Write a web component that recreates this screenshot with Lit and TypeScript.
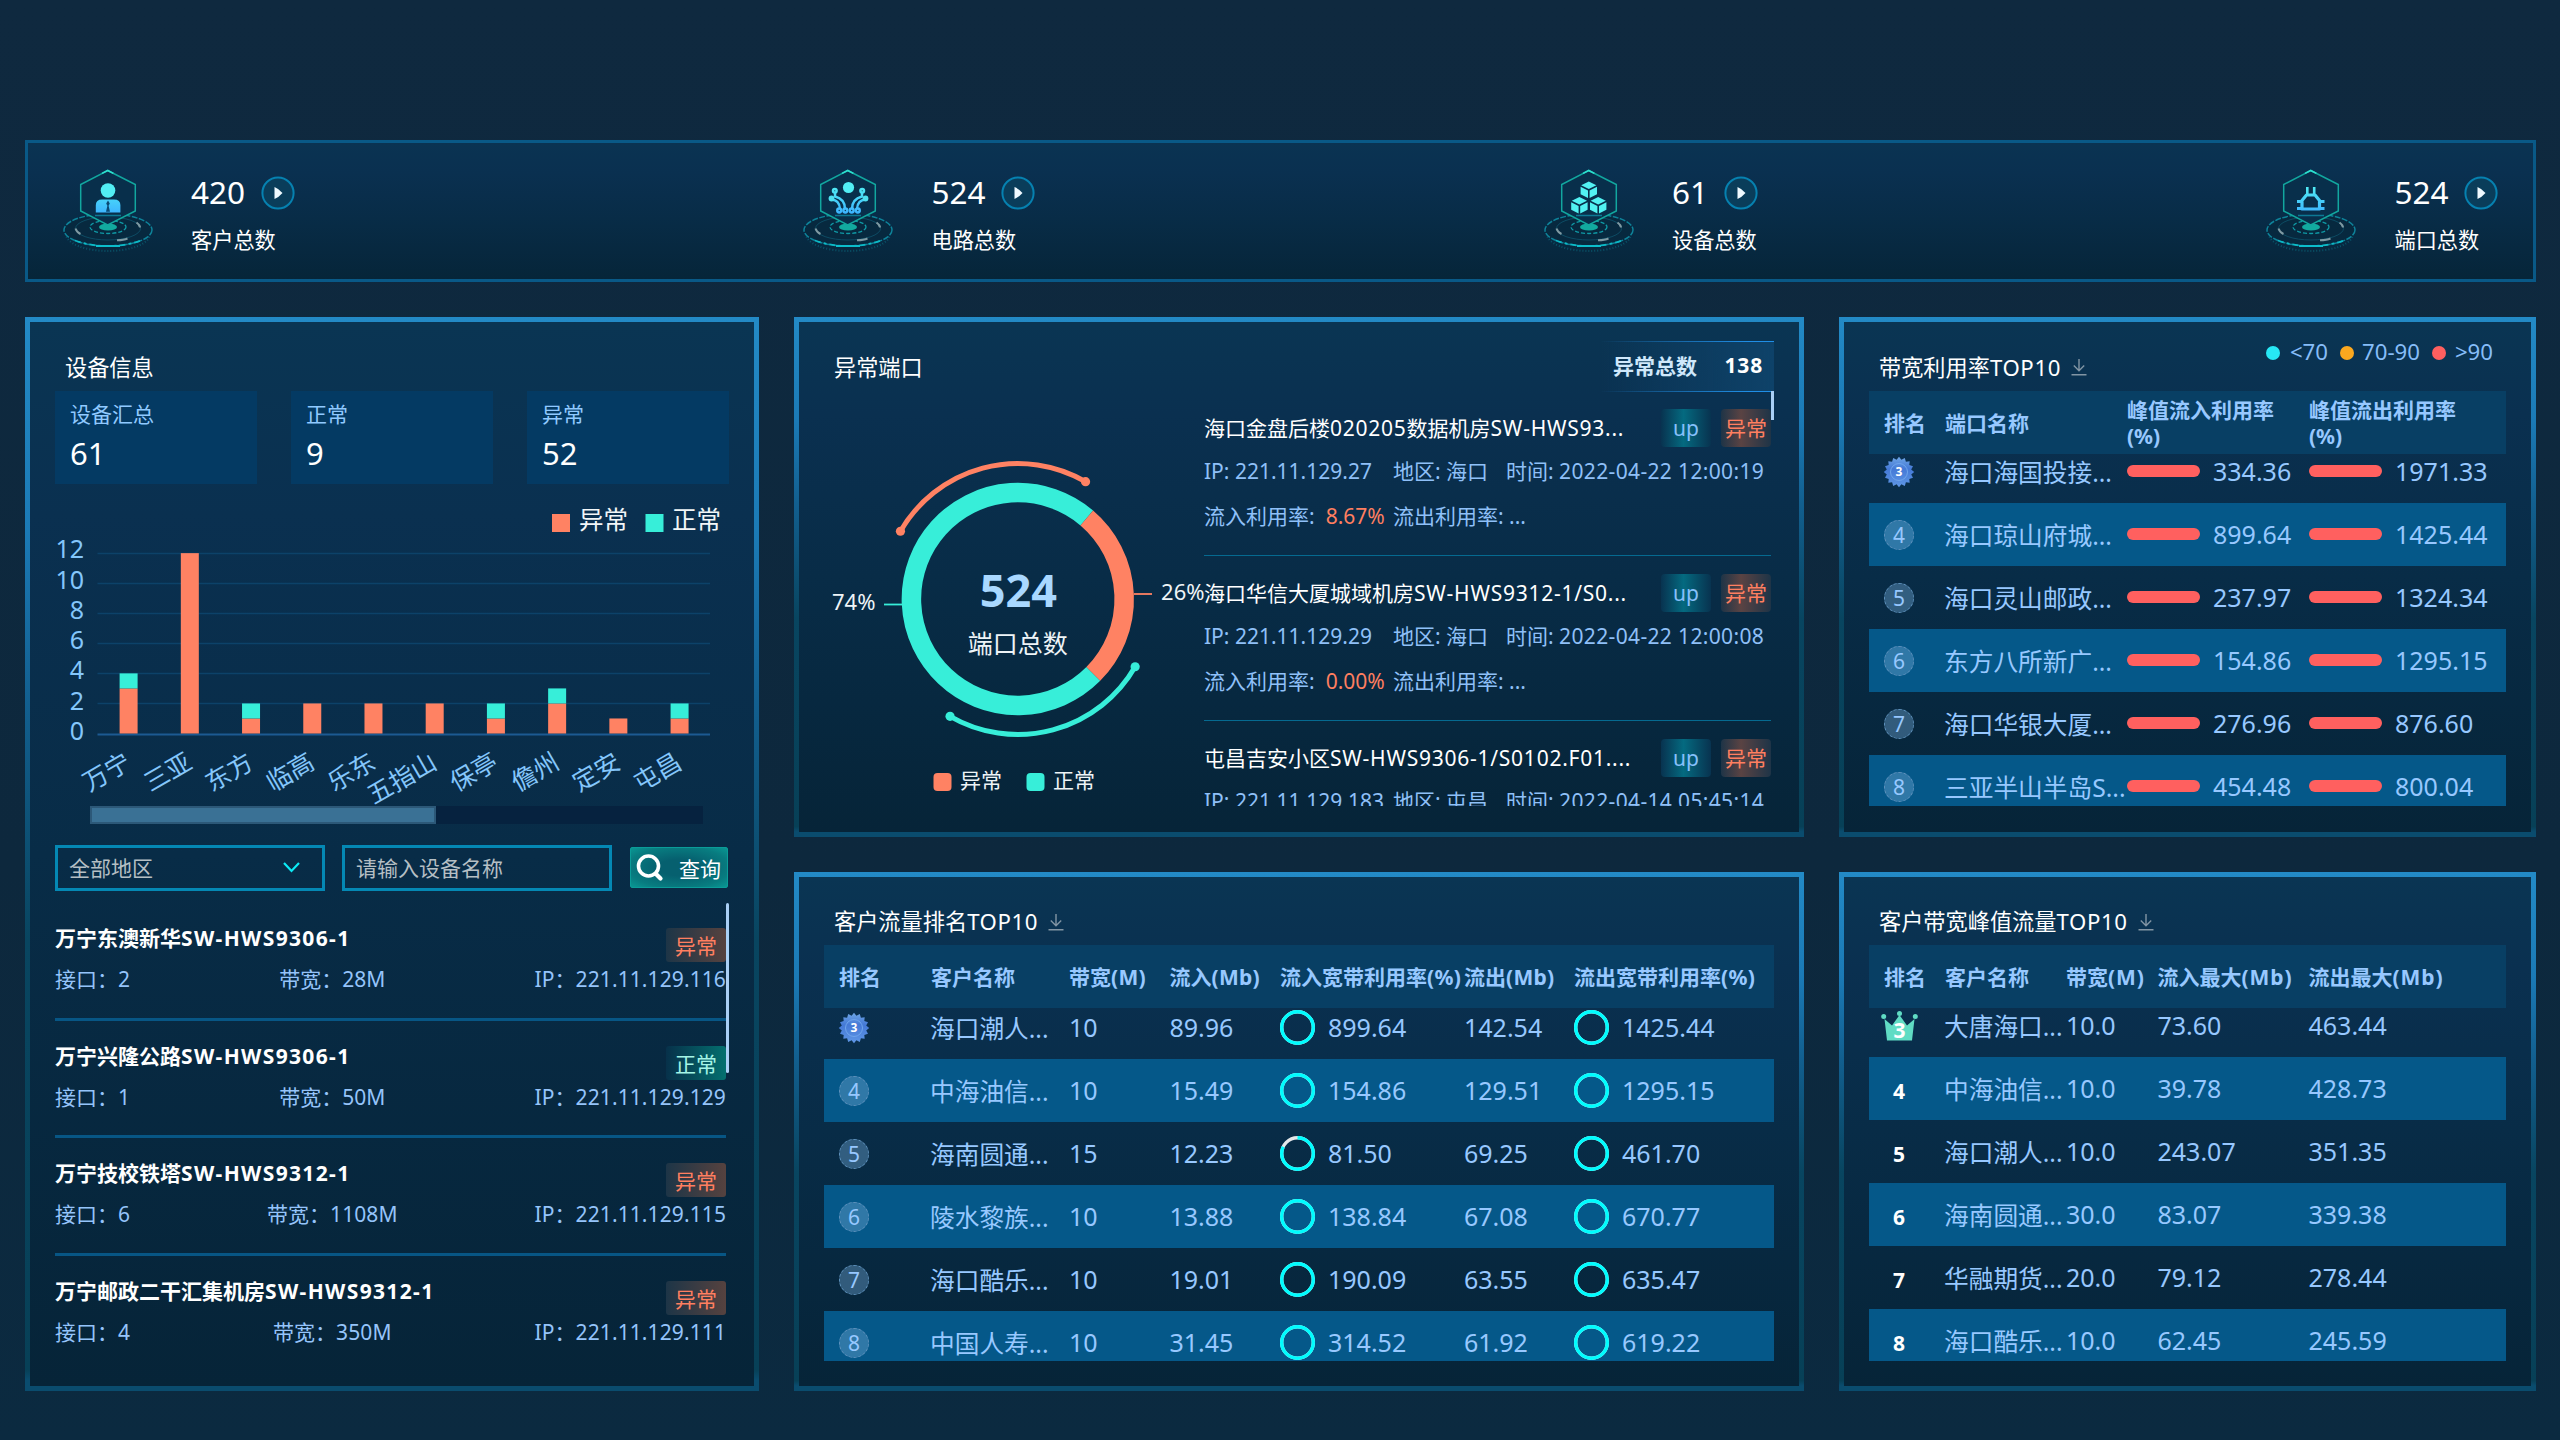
import { LitElement, html, svg, css } from "lit";
import { customElement, property } from "lit/decorators.js";
import { classMap } from "lit/directives/class-map.js";

const FONT = css`"Noto Sans", "Noto Sans CJK SC", sans-serif`;

const base = css`
  :host {
    display: block;
    font-family: ${FONT};
    color: #fff;
  }
  * {
    box-sizing: border-box;
  }
  svg {
    display: block;
    overflow: visible;
  }
  .lat {
    letter-spacing: var(--track, 0.6px);
  }
`;

/* Wraps the Latin runs of a mixed string so that they can be tracked apart from the Chinese ones. */
const mix = (s: string) =>
  s.split(/([\x21-\x7e]+)/).map((part, i) => (i % 2 ? html`<span class="lat">${part}</span>` : part));

/* ---------- totals strip ---------- */

const glyphs: Record<string, unknown> = {
  customer: svg`
    <circle cx="45" cy="22.5" r="7.3" fill="#52eef4"/>
    <path d="M32.8 44.6V37q0-5.6 6.4-5.6H51q6.4 0 6.4 5.6v7.6Z" fill="url(#tone)"/>
    <path d="M45 32.5l-1.8 3 1.2 2.2-1.4 6h4l-1.4-6 1.2-2.2Z" fill="#0b4a74"/>`,
  circuit: svg`
    <circle cx="45.5" cy="19.5" r="5.6" fill="#52eef4"/>
    <g fill="none" stroke="url(#tone)" stroke-width="2.5">
      <circle cx="31.8" cy="22.8" r="1.8"/><circle cx="59.2" cy="22.8" r="1.8"/>
      <path d="M32 25v3.5q10 2.5 10 12.500M59 25v3.5q-10 2.5-10 12.500"/>
      <path d="M28.500 31.500q8 .5 8.500 9.500M62.500 31.500q-8 .5-8.500 9.500"/>
      <circle cx="36.200" cy="42.500" r="1.900"/><circle cx="42.300" cy="42.500" r="1.900"/>
      <circle cx="48.700" cy="42.500" r="1.900"/><circle cx="54.800" cy="42.500" r="1.900"/>
    </g>
    <circle cx="28.500" cy="30.500" r="2.900" fill="#4fe0f0"/><circle cx="62.500" cy="30.500" r="2.900" fill="#4fe0f0"/>`,
  device: svg`${[
    [44.8, 13.5],
    [35.4, 29],
    [54.2, 29],
  ].map(
    ([x, y]) => svg`<g transform="translate(${x} ${y})" fill="url(#tone)">
      <path d="M0 0l7.600 3.800L0 7.600l-7.600-3.800Z"/>
      <path d="M-8.200 5.200L-.8 9v7.600l-7.400-3.800ZM8.200 5.200L.8 9v7.600l7.400-3.800Z"/></g>`
  )}`,
  port: svg`
    <g fill="none" stroke="url(#tone)" stroke-width="3.200" stroke-linejoin="round">
      <path d="M41.300 19v7M48.200 19v7" stroke-width="2.600"/>
      <path d="M40.500 27h8.500l4.500 5.500v8.500h-17.500v-8.500Z"/>
      <path d="M31 33.500h5M31 40.500h5M53.500 33.500h5M53.500 40.500h5"/>
    </g>`,
};

@customElement("total-tile")
class TotalTile extends LitElement {
  @property() value = "";
  @property() label = "";
  @property() kind = "customer";
  static styles = [
    base,
    css`
      :host {
        display: flex;
        padding-top: 25px;
      }
      .text {
        padding: 0 0 0 38px;
      }
      .row {
        display: flex;
        align-items: center;
        height: 49px;
        font-size: 31.500px;
        gap: 15.500px;
      }
      .row span {
        padding-bottom: 2px;
      }
      .label {
        font-size: 21.200px;
        line-height: 45px;
      }
    `,
  ];
  render() {
    return html`
      <svg width="90" height="84" viewBox="0 0 90 84">
        <defs>
          <linearGradient id="tone" gradientUnits="userSpaceOnUse" x1="0" y1="16" x2="0" y2="45">
            <stop offset="0" stop-color="#52f2f2" />
            <stop offset="1" stop-color="#3db4ff" />
          </linearGradient>
        </defs>
        <g fill="none">
          <ellipse cx="45" cy="66" rx="42" ry="17" stroke="#0b6f84" stroke-width="2" stroke-dasharray="1 2" opacity=".6" />
          <ellipse cx="45" cy="62" rx="44" ry="16" fill="#07293f" stroke="#0e8299" stroke-width="1.500" stroke-dasharray="6 1.500" />
          <path d="M12 72.500Q27 78 45 78t33-5.500" stroke="#0cb9c6" stroke-width="1.800" stroke-dasharray="6 3 3 3" />
          <path d="M33 78h24" stroke="#0cbccb" stroke-width="2" />
          <ellipse cx="45" cy="60.500" rx="32.500" ry="11.500" stroke="#0c4b63" />
          <path d="M12.500 60.500q1 3.500 5 5.500M54 72.300q7-.3 10.500-1.800M73.500 54.500q3.500 2.500 3.500 5" stroke="#7f9aa3" stroke-width="2" />
          <ellipse cx="45" cy="59" rx="18" ry="6.500" stroke="#0f9aa6" stroke-width="1.300" stroke-dasharray="4 2" />
          <ellipse cx="45" cy="59" rx="9" ry="3.600" fill="#12aa9f" />
          <path d="M44.700 2.500L72.300 16.500V43L44.700 57 17.700 43V16.500Z" fill="#082f4b" stroke="#12a79f" stroke-width="1.500" />
          <path d="M39 5.400L44.700 2.500l5.700 2.900" stroke="#2fe0cf" stroke-width="1.600" />
          <path d="M32 47.500h26" stroke="#0c7894" stroke-width="1.500" />
        </g>
        ${glyphs[this.kind]}
      </svg>
      <div class="text">
        <div class="row">
          <span>${this.value}</span>
          <svg width="34" height="34" viewBox="0 0 34 34">
            <circle cx="17" cy="17" r="15.600" fill="#0a3d5a" stroke="#0681b0" stroke-width="2" />
            <path d="M13.500 11q4 1.500 8 6-4 4.500-8 6Z" fill="#effaff" />
          </svg>
        </div>
        <div class="label">${this.label}</div>
      </div>
    `;
  }
}

/* ---------- framed panel ---------- */

@customElement("frame-panel")
class FramePanel extends LitElement {
  @property() heading = "";
  @property({ type: Boolean }) download = false;
  static styles = [
    base,
    css`
      :host {
        box-sizing: border-box;
        border: 5px solid;
        border-image: linear-gradient(180deg, #238ac6 0, #1b7ab6 20%, #125f8f 36%, #084560 58%, #074057 98%, #0a4c6e 99%) 5;
        background: linear-gradient(180deg, #0a3553, #0a3050 18%, #082c47 50%, #062438 100%);
        padding: 0 25px;
        overflow: hidden;
      }
      .bar {
        display: flex;
        justify-content: space-between;
        height: var(--bar, 69px);
      }
      .title {
        display: flex;
        align-items: center;
        gap: 10px;
        padding: 19px 0 0 10px;
        font-size: 22.200px;
        white-space: nowrap;
      }
      .title svg {
        margin-top: 2px;
      }
    `,
  ];
  render() {
    return html`
      <div class="bar">
        <div class="title">
          <span>${mix(this.heading)}</span>
          ${this.download
            ? html`<svg width="16" height="18" viewBox="0 0 16 18" fill="none" stroke="#8295a4" stroke-width="1.400">
                <path d="M8 1v11.500M2.800 7.500L8 12.700l5.200-5.200M.5 16.800h15" />
              </svg>`
            : ""}
        </div>
        <slot name="extra"></slot>
      </div>
      <slot></slot>
    `;
  }
}

/* ---------- device bar chart ---------- */

const regions: [string, number, number][] = [
  ["万宁", 3, 1],
  ["三亚", 12, 0],
  ["东方", 1, 1],
  ["临高", 2, 0],
  ["乐东", 2, 0],
  ["五指山", 2, 0],
  ["保亭", 1, 1],
  ["儋州", 2, 1],
  ["定安", 1, 0],
  ["屯昌", 1, 1],
];

@customElement("region-chart")
class RegionChart extends LitElement {
  static styles = [
    base,
    css`
      text {
        font-size: 25px;
        fill: #84c6fb;
      }
      .key {
        font-size: 24.500px;
        fill: #f2f6f8;
      }
      .bad {
        fill: #ff8263;
      }
      .good {
        fill: #37eed9;
      }
    `,
  ];
  render() {
    const zero = 249.5;
    const unit = 15.03;
    return html`<svg width="674" height="361" viewBox="0 0 674 361">
      <rect class="bad" x="497" y="30" width="18" height="18" />
      <text class="key" x="524" y="45">异常</text>
      <rect class="good" x="590.500" y="30" width="18" height="18" />
      <text class="key" x="617" y="45">正常</text>
      ${[0, 2, 4, 6, 8, 10, 12].map((v) => {
        const y = Math.round(zero - v * unit) + 0.5;
        return svg`
          <path d="M42.500 ${y}H655" stroke=${v ? "#0c4269" : "#1c5a92"} stroke-width=${v ? 1.5 : 2}/>
          <text x="29" y=${zero - v * 15.15 + 6.5} text-anchor="end">${v}</text>`;
      })}
      ${regions.map(([name, bad, good], i) => {
        const cx = 73.6 + i * 61.22;
        return svg`
          <rect class="bad" x=${cx - 9} y=${zero - bad * unit} width="18" height=${bad * unit}/>
          <rect class="good" x=${cx - 9} y=${zero - (bad + good) * unit} width="18" height=${good * unit}/>
          <text transform="translate(${cx - 0.5} 275.500) rotate(-30)" y="9" text-anchor="end">${name}</text>`;
      })}
      <rect x="35" y="322" width="613" height="18" fill="#06223f" />
      <rect x="36" y="323" width="344" height="16" fill="#3a7195" stroke="#2c5878" stroke-width="2" />
    </svg>`;
  }
}

/* ---------- device list panel ---------- */

const devices = [
  { name: "万宁东澳新华SW-HWS9306-1", ports: "2", band: "28M", ip: "221.11.129.116", ok: false },
  { name: "万宁兴隆公路SW-HWS9306-1", ports: "1", band: "50M", ip: "221.11.129.129", ok: true },
  { name: "万宁技校铁塔SW-HWS9312-1", ports: "6", band: "1108M", ip: "221.11.129.115", ok: false },
  { name: "万宁邮政二干汇集机房SW-HWS9312-1", ports: "4", band: "350M", ip: "221.11.129.111", ok: false },
];

@customElement("device-panel")
class DevicePanel extends LitElement {
  static styles = [
    base,
    css`
      .cards {
        display: grid;
        grid-template-columns: repeat(3, 202px);
        gap: 34px;
      }
      .card {
        height: 93px;
        padding-left: 15px;
        background: #043a63;
      }
      .cap {
        height: 47px;
        font-size: 21px;
        line-height: 46px;
        color: #90c9ff;
      }
      .num {
        font-size: 31px;
        line-height: 31px;
      }
      .controls {
        display: flex;
        height: 46px;
      }
      .field {
        display: flex;
        align-items: center;
        justify-content: space-between;
        width: 270px;
        margin-right: 17px;
        padding: 0 22px 3px 11px;
        border: 3px solid #0488b4;
        font-size: 21px;
        color: #b5bfc4;
      }
      .query {
        display: flex;
        align-items: center;
        justify-content: space-between;
        width: 98px;
        height: 41px;
        margin: 2px 0 0 1px;
        padding: 0 6px 0 5px;
        border: 1px solid #0b9c98;
        border-radius: 2px;
        background: radial-gradient(ellipse at 50% 50%, #06606f 30%, #087c80 75%, #0aa79f 115%);
        font-size: 21px;
        white-space: nowrap;
      }
      .list {
        position: relative;
        margin-top: 12px;
        padding-right: 3px;
        height: 458px;
        overflow: hidden;
      }
      .thumb {
        position: absolute;
        right: 0;
        top: 0;
        width: 3px;
        height: 170px;
        border-radius: 2px;
        background: #a9cff5;
      }
      .item {
        height: 117.600px;
        padding-top: 25px;
        border-bottom: 3px solid #075685;
      }
      .item:nth-child(4) {
        border-bottom: 0;
      }
      .head,
      .info {
        display: flex;
        justify-content: space-between;
      }
      .head {
        --track: 1.350px;
        height: 34px;
        font-size: 21px;
        font-weight: 700;
        line-height: 21px;
      }
      .info {
        --track: 0.100px;
        font-size: 21px;
        line-height: 34px;
        color: #95c4fa;
      }
      .tag {
        width: 60px;
        height: 34px;
        border-radius: 3px;
        font-weight: 400;
        line-height: 37px;
        text-align: center;
        color: #ff7f60;
        background: linear-gradient(90deg, #1d3547, #56423f);
      }
      .tag.ok {
        color: #a3f5e6;
        background: linear-gradient(90deg, #07314a, #04706f);
      }
    `,
  ];
  render() {
    return html`
      <div class="cards">
        ${[
          ["设备汇总", "61"],
          ["正常", "9"],
          ["异常", "52"],
        ].map(
          ([cap, num]) => html`<div class="card">
            <div class="cap">${cap}</div>
            <div class="num">${num}</div>
          </div>`
        )}
      </div>
      <region-chart></region-chart>
      <div class="controls">
        <div class="field">
          <span>全部地区</span>
          <svg width="17" height="12" viewBox="0 0 17 12" fill="none" stroke="#0ceaf5" stroke-width="2.200">
            <path d="M1 2l7.500 8 7.500-8" />
          </svg>
        </div>
        <div class="field"><span>请输入设备名称</span></div>
        <div class="query">
          <svg width="27" height="27" viewBox="0 0 27 27" fill="none" stroke="#fff" stroke-width="3.600" stroke-linecap="round">
            <circle cx="12.500" cy="12" r="10" />
            <path d="M20 20l4.500 4.500" stroke-width="4.200" />
          </svg>
          <span>查询</span>
        </div>
      </div>
      <div class="list">
        ${devices.map(
          (d) => html`<div class="item">
            <div class="head">
              <span>${mix(d.name)}</span>
              <span class=${classMap({ tag: true, ok: d.ok })}>${d.ok ? "正常" : "异常"}</span>
            </div>
            <div class="info">
              <span>${mix("接口：" + d.ports)}</span><span>${mix("带宽：" + d.band)}</span><span>${mix("IP：" + d.ip)}</span>
            </div>
          </div>`
        )}
        <div class="thumb"></div>
      </div>
    `;
  }
}

/* ---------- abnormal ports ---------- */

const ports = [
  { name: "海口金盘后楼020205数据机房SW-HWS93...", ip: "221.11.129.27", area: "海口", time: "2022-04-22 12:00:19", rate: "8.67%" },
  { name: "海口华信大厦城域机房SW-HWS9312-1/S0...", ip: "221.11.129.29", area: "海口", time: "2022-04-22 12:00:08", rate: "0.00%" },
  { name: "屯昌吉安小区SW-HWS9306-1/S0102.F01....", ip: "221.11.129.183", area: "屯昌", time: "2022-04-14 05:45:14", rate: "" },
];

const CX = 193.8;
const CY = 208;
const polar = (r: number, deg: number) => {
  const a = (deg * Math.PI) / 180;
  return `${(CX + r * Math.cos(a)).toFixed(2)} ${(CY + r * Math.sin(a)).toFixed(2)}`;
};
const arc = (r: number, from: number, to: number) =>
  `M${polar(r, from)}A${r} ${r} 0 ${to - from > 180 ? 1 : 0} 1 ${polar(r, to)}`;

@customElement("port-panel")
class PortPanel extends LitElement {
  static styles = [
    base,
    css`
      :host {
        display: grid;
        grid-template-columns: 380px 570px;
        height: 415px;
      }
      .ring {
        fill: none;
        stroke-width: 19.500px;
      }
      .thin {
        fill: none;
        stroke-width: 5px;
        stroke-linecap: round;
      }
      .bad {
        stroke: #ff8263;
      }
      .good {
        stroke: #37eed9;
      }
      .fbad {
        fill: #ff8263;
      }
      .fgood {
        fill: #37eed9;
      }
      text {
        font-size: 21px;
        fill: #eef4f7;
      }
      .pct {
        font-size: 22px;
      }
      .big {
        font-size: 45px;
        font-weight: 700;
        fill: #a9d8ff;
      }
      .mid {
        font-size: 25px;
      }
      .list {
        position: relative;
        height: 415px;
        padding-right: 3px;
        overflow: hidden;
        font-size: 21px;
        white-space: nowrap;
      }
      .thumb {
        position: absolute;
        right: 0;
        top: 0;
        width: 3px;
        height: 29px;
        background: #a9cff5;
      }
      .item {
        height: 165.200px;
        padding-top: 18px;
        border-bottom: 1px solid #056a90;
      }
      .head {
        --track: 0.750px;
        display: flex;
        align-items: center;
        height: 38px;
        gap: 10px;
      }
      .name {
        flex: 1;
        padding-bottom: 3px;
      }
      .tag {
        width: 50px;
        height: 38px;
        border-radius: 4px;
        line-height: 38px;
        text-align: center;
        color: #86c0fb;
        background: linear-gradient(90deg, #083350, #046a80 45%, #083350);
      }
      .tag.warn {
        color: #ff7f60;
        background: linear-gradient(90deg, #1e3447, #5a4343 40%, #1e3447);
      }
      .meta {
        --track: 0.100px;
        display: grid;
        grid-template-columns: 189px 113px auto;
        height: 50px;
        line-height: 48px;
        color: #8fc0f8;
      }
      .meta + .meta {
        height: 40px;
        line-height: 38px;
      }
      .time {
        letter-spacing: 0.350px;
      }
      .rate {
        margin-left: 11px;
        color: #ff7f60;
      }
      .wide {
        grid-column: 2 / 4;
      }
    `,
  ];
  render() {
    return html`
      <svg width="380" height="415" viewBox="0 0 380 415">
        <path class="ring good" d=${arc(106.4, 44.8, 310.4)} />
        <path class="ring bad" d=${arc(106.4, -49.6, 44.8)} />
        <path class="thin bad" d=${arc(135.5, 210, 300)} />
        <path class="thin good" d=${arc(135.5, 30, 120)} />
        ${[210, 300, 30, 120].map((a) => {
          const [x, y] = polar(135.5, a).split(" ");
          return svg`<circle class=${a > 180 ? "fbad" : "fgood"} cx=${x} cy=${y} r="4.600"/>`;
        })}
        <path d="M60 213.500h18" class="good" stroke-width="1.800" />
        <path d="M310 203h18" class="bad" stroke-width="1.800" />
        <text class="pct" x="8" y="219">74%</text>
        <text class="pct" x="380.500" y="209" text-anchor="end">26%</text>
        <text class="big" x=${CX + 0.5} y="216" text-anchor="middle">524</text>
        <text class="mid" x=${CX} y="262" text-anchor="middle">端口总数</text>
        <rect class="fbad" x="109.500" y="382" width="18" height="18" rx="4" />
        <text x="136" y="397">异常</text>
        <rect class="fgood" x="202.500" y="382" width="18" height="18" rx="4" />
        <text x="229" y="397">正常</text>
      </svg>
      <div class="list">
        ${ports.map(
          (p) => html`<div class="item">
            <div class="head">
              <span class="name">${mix(p.name)}</span><span class="tag">up</span><span class="tag warn">异常</span>
            </div>
            <div class="meta">
              <span>IP: ${p.ip}</span><span>地区: ${p.area}</span><span>时间: <span class="time">${p.time}</span></span>
            </div>
            ${p.rate
              ? html`<div class="meta">
                  <span>流入利用率:<span class="rate">${p.rate}</span></span><span class="wide">流出利用率: ...</span>
                </div>`
              : ""}
          </div>`
        )}
        <div class="thumb"></div>
      </div>
    `;
  }
}

/* ---------- ranking tables ---------- */

const tableStyles = [
  base,
  css`
    :host {
      font-size: 25px;
      color: #97c8ff;
      white-space: nowrap;
    }
    .head,
    .row {
      display: grid;
      grid-template-columns: var(--cols);
      align-items: center;
      height: 63px;
      padding-left: 15px;
    }
    .head {
      --track: 0.100px;
      position: relative;
      background: #083f64;
      font-size: 21px;
      font-weight: 700;
      line-height: 26px;
    }
    .body {
      height: var(--view);
      overflow: hidden;
    }
    .row:first-child {
      margin-top: var(--shift);
    }
    .row:nth-child(even) {
      background: #055889;
    }
    .row > span {
      padding-bottom: 2px;
    }
    .row > .name {
      margin-left: -1px;
      font-size: 24.700px;
    }
    .cell {
      display: flex;
      align-items: center;
      gap: 13px;
    }
    .row > .medal {
      display: grid;
      place-items: center;
      width: 30px;
      height: 30px;
      padding: 0;
      border: 1px dashed #5f92bd;
      border-radius: 50%;
      background: rgba(110, 165, 210, 0.42);
      font-size: 21px;
      line-height: 28px;
    }
  `,
];

const spikes = Array.from({ length: 32 }, (_, i) => {
  const a = (i * Math.PI) / 16;
  const r = i % 2 ? 12.4 : 15.2;
  return `${(15 + r * Math.sin(a)).toFixed(1)},${(15 - r * Math.cos(a)).toFixed(1)}`;
}).join(" ");

const medal = (n: number) =>
  n === 3
    ? html`<svg width="30" height="30" viewBox="0 0 30 30">
        <defs>
          <linearGradient id="m" x1="0" y1="0" x2="0" y2="1">
            <stop offset="0" stop-color="#6fa6e6" />
            <stop offset=".4" stop-color="#4479d6" />
            <stop offset="1" stop-color="#5f97e6" />
          </linearGradient>
        </defs>
        <polygon points=${spikes} fill="url(#m)" />
        <circle cx="15" cy="15" r="8.500" fill="none" stroke="#6fa5ec" />
        <text x="15" y="19.300" text-anchor="middle" font-size="12" font-weight="700" fill="#fff">3</text>
      </svg>`
    : html`<span class="medal">${n}</span>`;

const usage: [string, string, string][] = [
  ["海口海国投接...", "334.36", "1971.33"],
  ["海口琼山府城...", "899.64", "1425.44"],
  ["海口灵山邮政...", "237.97", "1324.34"],
  ["东方八所新广...", "154.86", "1295.15"],
  ["海口华银大厦...", "276.96", "876.60"],
  ["三亚半山半岛S...", "454.48", "800.04"],
];

@customElement("usage-table")
class UsageTable extends LitElement {
  static styles = [
    ...tableStyles,
    css`
      :host {
        --cols: 61px 182px 182px auto;
        --view: 352px;
        --shift: -14px;
      }
      .bar {
        width: 73px;
        height: 12px;
        border-radius: 6px;
        background: #ff605f;
      }
    `,
  ];
  render() {
    return html`
      <div class="head">
        <span>排名</span><span>端口名称</span><span>峰值流入利用率<br />(%)</span><span>峰值流出利用率<br />(%)</span>
      </div>
      <div class="body">
        ${usage.map(
          ([name, a, b], i) => html`<div class="row">
            ${medal(i + 3)}<span class="name">${name}</span>
            <span class="cell"><i class="bar"></i>${a}</span>
            <span class="cell"><i class="bar"></i>${b}</span>
          </div>`
        )}
      </div>
    `;
  }
}

const flow = [
  ["海口潮人...", "10", "89.96", "899.64", "142.54", "1425.44"],
  ["中海油信...", "10", "15.49", "154.86", "129.51", "1295.15"],
  ["海南圆通...", "15", "12.23", "81.50", "69.25", "461.70"],
  ["陵水黎族...", "10", "13.88", "138.84", "67.08", "670.77"],
  ["海口酷乐...", "10", "19.01", "190.09", "63.55", "635.47"],
  ["中国人寿...", "10", "31.45", "314.52", "61.92", "619.22"],
];

@customElement("flow-table")
class FlowTable extends LitElement {
  static styles = [
    ...tableStyles,
    css`
      :host {
        --cols: 92px 138px 100.500px 110.500px 184px 110px auto;
        --view: 353px;
        --shift: -12px;
      }
      .cell svg {
        margin-top: 2px;
      }
      .head {
        --track: 0.300px;
      }
    `,
  ];
  private gauge(v: string) {
    const len = 2 * Math.PI * 15.8;
    const part = (Math.min(Number(v), 100) / 100) * len;
    return html`<svg width="35" height="35" viewBox="0 0 35 35" fill="none" stroke-width="3.400">
      <circle cx="17.500" cy="17.500" r="15.800" stroke="#e4e7ea" />
      <circle cx="17.500" cy="17.500" r="15.800" stroke="#00fdff" stroke-dasharray="${part} ${len - part}" transform="rotate(-90 17.500 17.500)" />
    </svg>`;
  }
  render() {
    return html`
      <div class="head">
        ${["排名", "客户名称", "带宽(M)", "流入(Mb)", "流入宽带利用率(%)", "流出(Mb)", "流出宽带利用率(%)"].map(
          (h) => html`<span>${mix(h)}</span>`
        )}
      </div>
      <div class="body">
        ${flow.map(
          (r, i) => html`<div class="row">
            ${medal(i + 3)}<span class="name">${r[0]}</span><span>${r[1]}</span><span>${r[2]}</span>
            <span class="cell">${this.gauge(r[3])}${r[3]}</span>
            <span>${r[4]}</span>
            <span class="cell">${this.gauge(r[5])}${r[5]}</span>
          </div>`
        )}
      </div>
    `;
  }
}

const peak = [
  ["大唐海口...", "10.0", "73.60", "463.44"],
  ["中海油信...", "10.0", "39.78", "428.73"],
  ["海口潮人...", "10.0", "243.07", "351.35"],
  ["海南圆通...", "30.0", "83.07", "339.38"],
  ["华融期货...", "20.0", "79.12", "278.44"],
  ["海口酷乐...", "10.0", "62.45", "245.59"],
];

@customElement("peak-table")
class PeakTable extends LitElement {
  static styles = [
    ...tableStyles,
    css`
      :host {
        --cols: 61px 121px 91.500px 151px auto;
        --view: 353px;
        --shift: -14px;
      }
      .head {
        --track: 0.900px;
      }
      .row > .place {
        width: 30px;
        padding: 4px 0 0;
        font-size: 21px;
        font-weight: 700;
        text-align: center;
        color: #fff;
      }
      .crown {
        margin-left: -3px;
      }
    `,
  ];
  render() {
    return html`
      <div class="head">
        ${["排名", "客户名称", "带宽(M)", "流入最大(Mb)", "流出最大(Mb)"].map((h) => html`<span>${mix(h)}</span>`)}
      </div>
      <div class="body">
        ${peak.map(
          (r, i) => html`<div class="row">
            ${i === 0
              ? html`<svg class="crown" width="37" height="30" viewBox="0 0 37 30">
                  <path d="M3.500 8L11 14.500 18.500 4 26 14.500 33.500 8 31 29.500H6Z" fill="#60dcc4" />
                  <g fill="#60dcc4">
                    <circle cx="2.700" cy="5.500" r="2.500" /><circle cx="18.500" cy="2.600" r="2.500" /><circle cx="34.300" cy="5.500" r="2.500" />
                  </g>
                  <text x="18.500" y="26.500" text-anchor="middle" font-size="21" font-weight="700" fill="#fff">3</text>
                </svg>`
              : html`<span class="place">${i + 3}</span>`}
            ${r.map((c, k) => html`<span class=${k ? "value" : "name"}>${c}</span>`)}
          </div>`
        )}
      </div>
    `;
  }
}

/* ---------- page ---------- */

@customElement("app-root")
class AppRoot extends LitElement {
  static styles = [
    base,
    css`
      .page {
        width: 2560px;
        height: 1440px;
        padding: 140px 24px 0 25px;
        background: linear-gradient(180deg, #0f293f, #0d283d 60%, #0b2a40);
        overflow: hidden;
      }
      .totals {
        display: flex;
        justify-content: space-between;
        height: 142px;
        padding: 0 35px;
        border: 3px solid #095987;
        background: linear-gradient(180deg, #0a3352, #0a3050 22%, #082c47 55%, #062539);
      }
      .grid {
        display: grid;
        grid-template-columns: 734px 1010px 697px;
        grid-template-rows: 520px 519px;
        gap: 35px;
        margin-top: 35px;
      }
      .tall {
        grid-row: 1 / 3;
      }
      .low {
        --bar: 68px;
      }
      .sum {
        display: flex;
        align-items: center;
        justify-content: space-between;
        width: 173px;
        height: 51px;
        margin-top: 19px;
        padding: 0 11px 3px 12px;
        border: solid;
        border-width: 1px 0;
        border-image: linear-gradient(90deg, rgba(32, 140, 225, 0), #1f8ee6 85%) 1;
        background: linear-gradient(90deg, rgba(16, 70, 108, 0), #0e4269);
        font-size: 21px;
        font-weight: 700;
      }
      .sum .word {
        color: #cfe8fb;
      }
      .sum .count {
        letter-spacing: 0.800px;
      }
      .legend {
        display: flex;
        align-items: center;
        height: 60px;
        padding: 0 13px 1px 0;
        font-size: 22.200px;
        color: #86bdf8;
      }
      .dot {
        width: 14px;
        height: 14px;
        margin: 2px 8px 0 12px;
        border-radius: 50%;
      }
      .lo {
        background: #27e7f5;
        margin-right: 10px;
      }
      .mi {
        background: #fba81f;
      }
      .hi {
        background: #ff5f5f;
        margin-right: 9px;
      }
    `,
  ];
  render() {
    return html`<div class="page">
      <div class="totals">
        <total-tile kind="customer" value="420" label="客户总数"></total-tile>
        <total-tile kind="circuit" value="524" label="电路总数"></total-tile>
        <total-tile kind="device" value="61" label="设备总数"></total-tile>
        <total-tile kind="port" value="524" label="端口总数"></total-tile>
      </div>
      <div class="grid">
        <frame-panel class="tall" heading="设备信息"><device-panel></device-panel></frame-panel>
        <frame-panel heading="异常端口">
          <div slot="extra" class="sum"><span class="word">异常总数</span><span class="count">138</span></div>
          <port-panel></port-panel>
        </frame-panel>
        <frame-panel heading="带宽利用率TOP10" download>
          <div slot="extra" class="legend">
            <i class="dot lo"></i>&lt;70<i class="dot mi"></i>70-90<i class="dot hi"></i>&gt;90
          </div>
          <usage-table></usage-table>
        </frame-panel>
        <frame-panel class="low" heading="客户流量排名TOP10" download><flow-table></flow-table></frame-panel>
        <frame-panel class="low" heading="客户带宽峰值流量TOP10" download><peak-table></peak-table></frame-panel>
      </div>
    </div>`;
  }
}
